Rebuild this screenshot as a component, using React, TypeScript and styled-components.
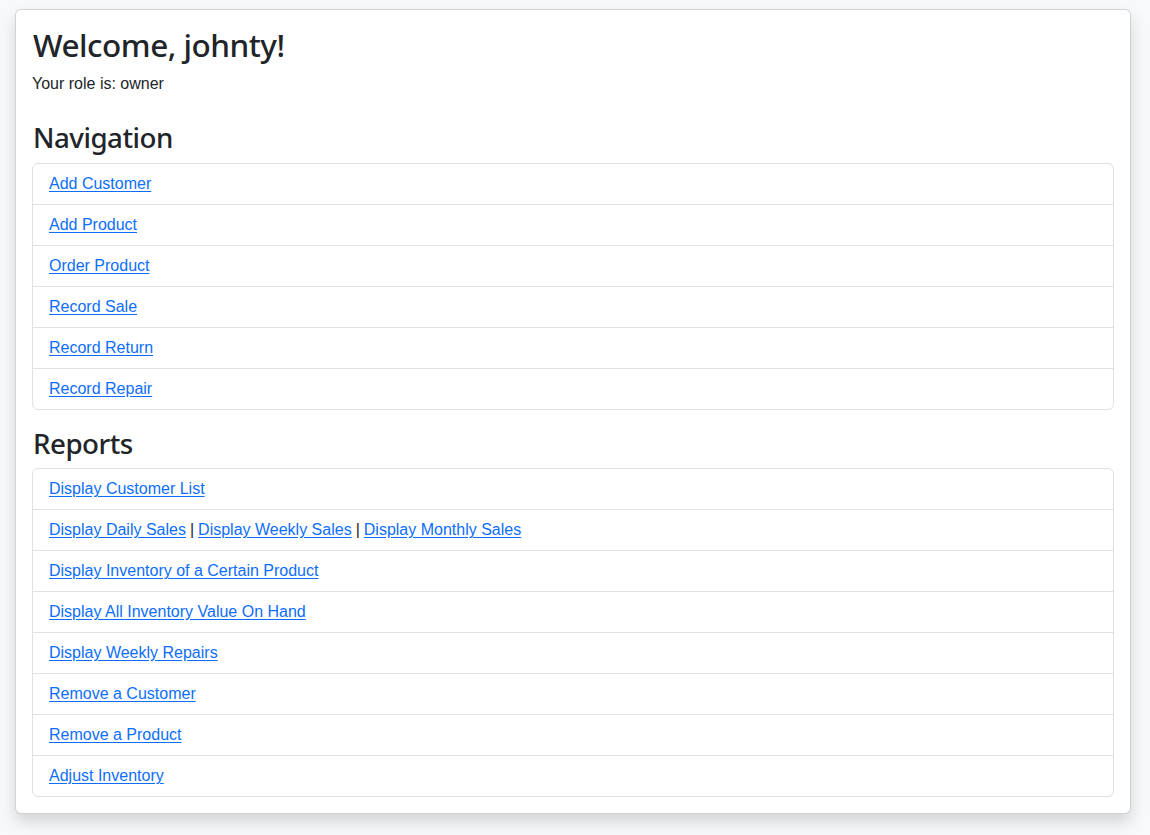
import React from "react";
import styled, { createGlobalStyle } from "styled-components";

const GlobalStyle = createGlobalStyle`
  html, body {
    margin: 0;
    padding: 0;
    background: #f8f9fa;
  }
  body {
    font-family: "Liberation Sans", Arial, sans-serif;
    font-size: 16px;
    line-height: 1.5;
    color: #212529;
  }
  * { box-sizing: border-box; }
`;

const Page = styled.div`
  padding: 9px 19px 23px 15px;
`;

const Card = styled.div`
  background: #fff;
  border: 1px solid rgba(0, 0, 0, 0.175);
  border-radius: 6px;
  box-shadow: 0 8px 16px rgba(0, 0, 0, 0.15);
  padding: 16px;
`;

const Title = styled.h2`
  margin: 0 0 8px;
  padding-left: 1px;
  font-family: "Noto Sans", sans-serif;
  font-size: 31.5px;
  font-weight: 500;
  line-height: 1.2;
  letter-spacing: -0.5px;
`;

const Role = styled.p`
  margin: 0;
`;

const SectionTitle = styled.h3<{ $top: number }>`
  margin: ${(p) => p.$top}px 0 8px;
  padding-left: 1px;
  font-family: "Noto Sans", sans-serif;
  font-size: 27.7px;
  font-weight: 500;
  line-height: 1.2;
  letter-spacing: -0.5px;
`;

const List = styled.ul`
  list-style: none;
  margin: 0;
  padding: 0;
  border: 1px solid #dee2e6;
  border-radius: 6px;
`;

const Item = styled.li`
  padding: 8px 16px;
  line-height: 24px;
  & + & {
    border-top: 1px solid #dee2e6;
  }
`;

const Link = styled.a`
  color: #0d6efd;
  text-decoration: underline;
  text-underline-offset: 2px;
`;

const Sep = styled.span`
  color: #212529;
  padding: 0 4px;
`;

const nav = [
  "Add Customer",
  "Add Product",
  "Order Product",
  "Record Sale",
  "Record Return",
  "Record Repair",
];

const reports: string[][] = [
  ["Display Customer List"],
  ["Display Daily Sales", "Display Weekly Sales", "Display Monthly Sales"],
  ["Display Inventory of a Certain Product"],
  ["Display All Inventory Value On Hand"],
  ["Display Weekly Repairs"],
  ["Remove a Customer"],
  ["Remove a Product"],
  ["Adjust Inventory"],
];

export default function App() {
  return (
    <>
      <GlobalStyle />
      <Page>
        <Card>
          <Title>Welcome, johnty!</Title>
          <Role>Your role is: owner</Role>
          <SectionTitle $top={25.5}>Navigation</SectionTitle>
          <List>
            {nav.map((n) => (
              <Item key={n}>
                <Link href="#">{n}</Link>
              </Item>
            ))}
          </List>
          <SectionTitle $top={17.5}>Reports</SectionTitle>
          <List>
            {reports.map((row, i) => (
              <Item key={i}>
                {row.map((r, j) => (
                  <React.Fragment key={r}>
                    {j > 0 && <Sep>|</Sep>}
                    <Link href="#">{r}</Link>
                  </React.Fragment>
                ))}
              </Item>
            ))}
          </List>
        </Card>
      </Page>
    </>
  );
}
